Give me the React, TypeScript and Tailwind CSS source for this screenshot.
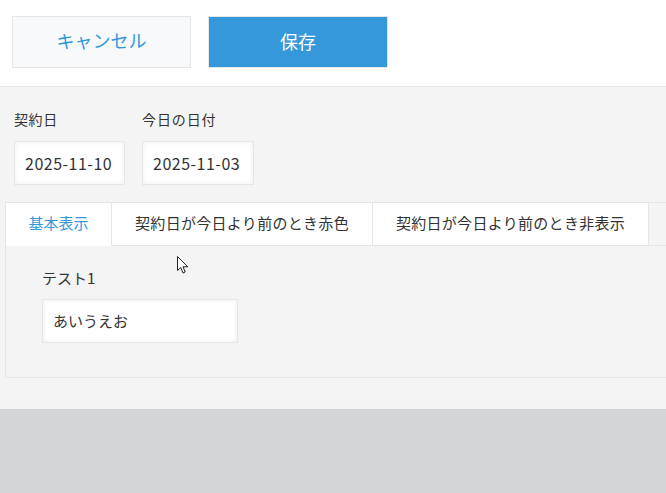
import React from "react";

const font = { fontFamily: '"Noto Sans CJK JP", "Noto Sans", sans-serif' };

export default function App() {
  return (
    <div className="relative w-[666px] h-[493px] overflow-hidden bg-[#d5d6d8] text-[#333333]" style={font}>
      {/* header */}
      <div className="h-[87px] bg-white border-b border-[#e3e7e8] flex items-start pt-[16px] pl-[12px] gap-[17px]">
        <button className="w-[179px] h-[52px] bg-[#f7f9fa] border border-[#e3e7e8] text-[#3498db] text-[18px] flex items-center justify-center pb-[3px]">
          キャンセル
        </button>
        <button className="w-[180px] h-[52px] bg-[#3498db] border border-[#e3e7e8] text-white text-[18px] flex items-center justify-center pb-[2px]">
          保存
        </button>
      </div>

      {/* body */}
      <div className="bg-[#f4f4f4] h-[322px] pt-[22px]">
        <div className="flex gap-[17px] pl-[14px]">
          <div className="flex flex-col">
            <div className="text-[14px] leading-[20px] h-[20px] tracking-[0.6px]">契約日</div>
            <div className="mt-[12px] w-[111px] h-[44px] bg-white border border-[#e3e7e8] shadow-[inset_0_0_5px_rgba(0,0,0,0.07)] flex items-center pl-[10px] text-[16px] tracking-[0.5px]">
              2025-11-10
            </div>
          </div>
          <div className="flex flex-col">
            <div className="text-[14px] leading-[20px] h-[20px] tracking-[0.9px]">今日の日付</div>
            <div className="mt-[12px] w-[112px] h-[44px] bg-white border border-[#e3e7e8] shadow-[inset_0_0_5px_rgba(0,0,0,0.07)] flex items-center pl-[10px] text-[16px] tracking-[0.5px]">
              2025-11-03
            </div>
          </div>
        </div>

        {/* tabs */}
        <div className="ml-[5px] mt-[17px] w-[700px]">
          <div className="flex h-[44px] border-t border-l border-[#e3e7e8]">
            <div className="w-[106px] h-[43px] bg-white border-r border-[#e3e7e8] text-[#3498db] text-[15px] flex items-center justify-center pb-[2px]">
              基本表示
            </div>
            <div className="w-[261px] h-[43px] bg-white border-r border-b border-[#e3e7e8] text-[15px] flex items-center justify-center tracking-[0.3px] pb-[1px]">
              契約日が今日より前のとき赤色
            </div>
            <div className="w-[276px] h-[43px] bg-white border-r border-b border-[#e3e7e8] text-[15px] flex items-center justify-center tracking-[0.3px] pb-[1px]">
              契約日が今日より前のとき非表示
            </div>
            <div className="flex-1 h-[43px] border-b border-[#e3e7e8]"></div>
          </div>
          <div className="h-[132px] border-l border-b border-[#e3e7e8] pl-[36px] pt-[22px]">
            <div className="text-[15px] leading-[20px] h-[20px]">テスト1</div>
            <div className="mt-[11px] w-[196px] h-[44px] bg-white border border-[#e3e7e8] shadow-[inset_0_0_5px_rgba(0,0,0,0.07)] flex items-center pl-[10px] text-[15px]">
              あいうえお
            </div>
          </div>
        </div>
      </div>

      {/* cursor */}
      <svg className="absolute left-[177px] top-[256px]" width="12" height="19" viewBox="0 0 12 19">
        <path d="M0.5 0.5 L0.5 14.5 L3.8 11.5 L6 17 L8.2 16 L6 10.8 L10.8 10.8 Z" fill="#ffffff" stroke="#222" strokeWidth="1" strokeLinejoin="miter" />
      </svg>
    </div>
  );
}
